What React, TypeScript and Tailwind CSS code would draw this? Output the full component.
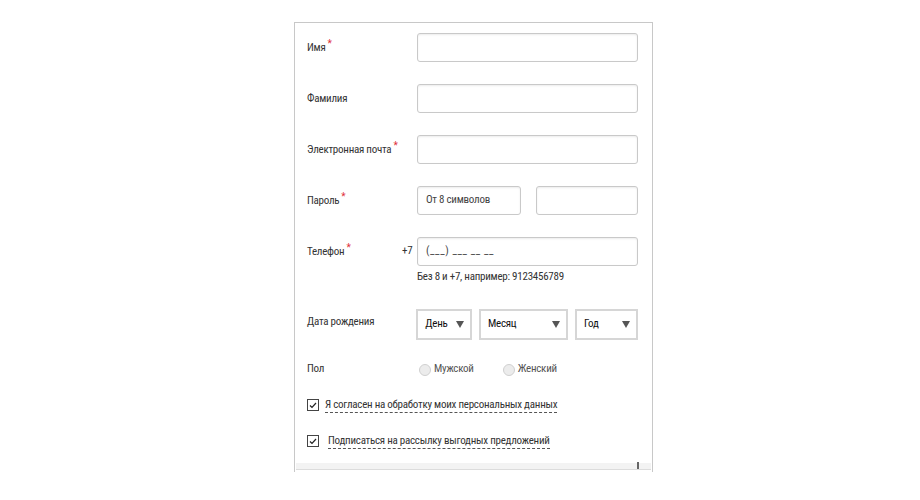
import React from "react";

const font = { fontFamily: '"Liberation Sans Narrow", "Roboto Condensed", "Liberation Sans", sans-serif', letterSpacing: "-0.25px" };

function Star() {
  return <span className="text-[#e0303a] text-[10px] relative -top-[4px] ml-[2px]">*</span>;
}

function Label({ children, star }: { children: React.ReactNode; star?: boolean }) {
  return (
    <div className="w-[110px] text-[11px] text-[#333] mt-[1px]">
      {children}
      {star && <Star />}
    </div>
  );
}

function Input({ w = "w-[221px]", placeholder, spaced }: { w?: string; placeholder?: string; spaced?: boolean }) {
  return (
    <div className={`${w} h-[29px] border border-[#c9c9c9] rounded-[3px] shadow-[inset_0_1px_2px_rgba(0,0,0,0.08)] bg-white flex items-center px-[8px] text-[11px] text-[#444]`}>
      <span className={spaced ? "tracking-[0.6px]" : ""}>{placeholder}</span>
    </div>
  );
}

function Select({ w, text }: { w: string; text: string }) {
  return (
    <div className={`${w} h-[31px] border-2 border-[#d6d6d6] bg-white flex items-center justify-between pl-[7px] pr-[6px] text-[11px] text-[#111]`}>
      <span>{text}</span>
      <svg width="8" height="7" viewBox="0 0 8 7"><path d="M0 0 H8 L4 7 Z" fill="#555" /></svg>
    </div>
  );
}

function Radio({ label }: { label: string }) {
  return (
    <div className="flex items-center gap-[3px] text-[11px] text-[#555]">
      <span className="w-[12px] h-[12px] rounded-full border border-[#d0d0d0] bg-[#ececec]" />
      <span>{label}</span>
    </div>
  );
}

function Check({ label, extraGap }: { label: string; extraGap?: boolean }) {
  return (
    <div className="flex items-center text-[11px] text-[#333]">
      <span className="w-[12px] h-[12px] border border-[#444] flex items-center justify-center bg-white">
        <svg width="8" height="7" viewBox="0 0 8 7"><path d="M1 3.5 L3 5.5 L7 1" stroke="#222" strokeWidth="1.2" fill="none" /></svg>
      </span>
      <span className={`${extraGap ? "ml-[9px]" : "ml-[6px]"} border-b border-dashed border-[#555] leading-[14px]`}>{label}</span>
    </div>
  );
}

export default function App() {
  return (
    <div className="w-[920px] h-[500px] bg-white relative" style={font}>
      <div className="absolute left-[294px] top-[22px] w-[359px] h-[450px] border border-[#c8c8c8] border-b-0 overflow-hidden">
        <div className="pl-[12px] pr-[14px] pt-[10px] flex flex-col">
          <div className="flex items-center h-[29px]">
            <Label star>Имя</Label>
            <Input />
          </div>
          <div className="flex items-center h-[29px] mt-[22px]">
            <Label>Фамилия</Label>
            <Input />
          </div>
          <div className="flex items-center h-[29px] mt-[22px]">
            <Label star>Электронная почта</Label>
            <Input />
          </div>
          <div className="flex items-center h-[29px] mt-[22px]">
            <Label star>Пароль</Label>
            <Input w="w-[104px]" placeholder="От 8 символов" />
            <div className="ml-[15px]"><Input w="w-[102px]" /></div>
          </div>
          <div className="flex items-center h-[29px] mt-[22px]">
            <div className="w-[95px] text-[11px] text-[#333] mt-[1px]">Телефон<Star /></div>
            <div className="w-[15px] text-[11px] text-[#333]">+7</div>
            <Input placeholder="(___) ___ __ __" spaced />
          </div>
          <div className="ml-[110px] mt-[3px] text-[11px] text-[#333]">Без 8 и +7, например: 9123456789</div>
          <div className="flex items-center h-[31px] mt-[23px]">
            <div className="w-[110px] text-[11px] text-[#333] -mt-[4px]">Дата рождения</div>
            <Select w="w-[56px]" text="День" />
            <div className="ml-[7px]"><Select w="w-[89px]" text="Месяц" /></div>
            <div className="ml-[7px]"><Select w="w-[63px]" text="Год" /></div>
          </div>
          <div className="flex items-center mt-[23px] h-[14px]">
            <div className="w-[112px] text-[11px] text-[#333]">Пол</div>
            <Radio label="Мужской" />
            <div className="ml-[29px]"><Radio label="Женский" /></div>
          </div>
          <div className="mt-[21px]"><Check label="Я согласен на обработку моих персональных данных" /></div>
          <div className="mt-[21px]"><Check label="Подписаться на рассылку выгодных предложений" extraGap /></div>
        </div>
        <div className="absolute left-[1px] right-[1px] bottom-[2px] h-[7px] bg-[#f3f3f3] border-b border-[#dcdcdc]" />
        <div className="absolute left-[342px] bottom-[3px] w-[2px] h-[7px] bg-[#666]" />
      </div>
    </div>
  );
}
